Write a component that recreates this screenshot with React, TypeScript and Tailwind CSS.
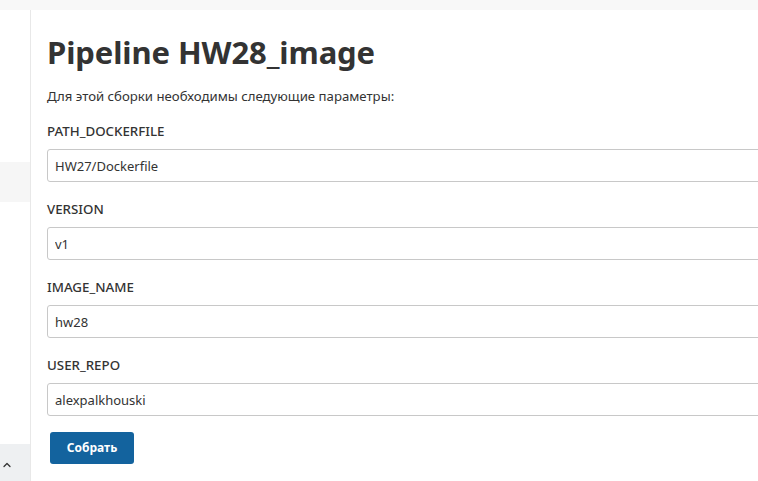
import { ChevronUp } from "lucide-react";

const fields = [
  { name: "PATH_DOCKERFILE", value: "HW27/Dockerfile" },
  { name: "VERSION", value: "v1" },
  { name: "IMAGE_NAME", value: "hw28" },
  { name: "USER_REPO", value: "alexpalkhouski" },
];

const App = () => {
  return (
    <div
      className="h-[481px] w-[758px] overflow-hidden bg-white text-[#333]"
      style={{ fontFamily: '"Noto Sans", "Open Sans", sans-serif' }}
    >
      <div className="h-[10px] bg-[#f8f8f8]" />
      <div className="flex h-[471px]">
        {/* sidebar */}
        <aside className="flex w-[31px] shrink-0 flex-col border-r border-[#e8e8e8]">
          <div className="h-[152px]" />
          <div className="h-[40px] bg-[#f6f6f6]" />
          <div className="flex-1" />
          <div className="flex h-[37px] items-center bg-[#eef0f2] pl-[1px] pt-[4px]">
            <ChevronUp size={12} strokeWidth={2.5} className="text-[#333]" />
          </div>
        </aside>

        {/* main */}
        <main className="min-w-0 flex-1 pl-[16px]">
          <h1 className="mt-[22px] text-[31px] font-bold leading-[40px] tracking-[-0.1px]">
            Pipeline HW28_image
          </h1>
          <p className="mt-[15px] text-[13.2px] leading-[18px]">
            Для этой сборки необходимы следующие параметры:
          </p>
          <form className="mt-[16px]">
            {fields.map((f) => (
              <div key={f.name} className="mb-[17px]">
                <label className="block text-[13.3px] font-medium leading-[20px]">
                  {f.name}
                </label>
                <input
                  className="mt-[8px] block h-[33px] w-[760px] rounded-[3px] border border-[#c8c8c8] px-[7px] text-[13px] text-[#333] outline-none"
                  defaultValue={f.value}
                />
              </div>
            ))}
            <button
              type="button"
              className="-mt-[1px] ml-[3px] h-[32px] w-[84px] rounded-[3px] bg-[#13639e] text-[12px] font-bold text-white"
            >
              Собрать
            </button>
          </form>
        </main>
      </div>
    </div>
  );
};

export default App;
